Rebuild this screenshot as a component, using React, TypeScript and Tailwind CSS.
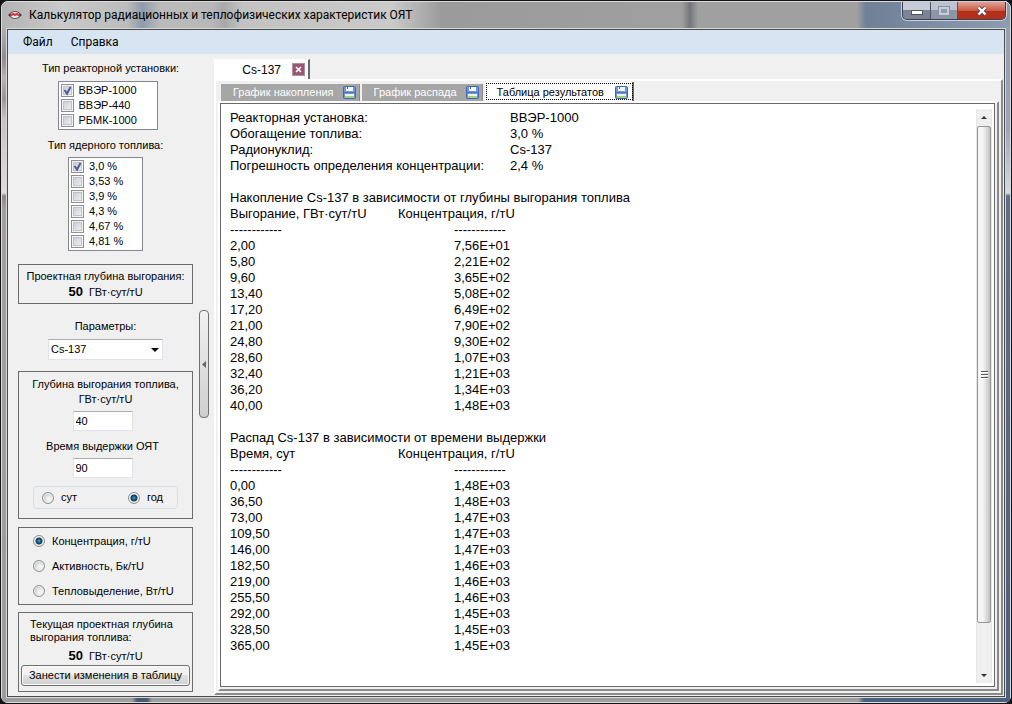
import { useState } from "react";
import type { ReactNode } from "react";

const reactors = ["ВВЭР-1000", "ВВЭР-440", "РБМК-1000"];
const fuels = ["3,0 %", "3,53 %", "3,9 %", "4,3 %", "4,67 %", "4,81 %"];
const quantities = ["Концентрация, г/тU", "Активность, Бк/тU", "Тепловыделение, Вт/тU"];

const summary = [
  ["Реакторная установка:", "ВВЭР-1000"],
  ["Обогащение топлива:", "3,0 %"],
  ["Радионуклид:", "Cs-137"],
  ["Погрешность определения концентрации:", "2,4 %"],
];

const accumulation = [
  ["2,00", "7,56E+01"],
  ["5,80", "2,21E+02"],
  ["9,60", "3,65E+02"],
  ["13,40", "5,08E+02"],
  ["17,20", "6,49E+02"],
  ["21,00", "7,90E+02"],
  ["24,80", "9,30E+02"],
  ["28,60", "1,07E+03"],
  ["32,40", "1,21E+03"],
  ["36,20", "1,34E+03"],
  ["40,00", "1,48E+03"],
];

const decay = [
  ["0,00", "1,48E+03"],
  ["36,50", "1,48E+03"],
  ["73,00", "1,47E+03"],
  ["109,50", "1,47E+03"],
  ["146,00", "1,47E+03"],
  ["182,50", "1,46E+03"],
  ["219,00", "1,46E+03"],
  ["255,50", "1,46E+03"],
  ["292,00", "1,45E+03"],
  ["328,50", "1,45E+03"],
  ["365,00", "1,45E+03"],
];

function AppIcon() {
  return (
    <svg width="14" height="10" viewBox="0 0 14 10">
      <path d="M4 1.5 0 5l4 3.5z" fill="#7d2330" />
      <path d="M10 1.5 14 5l-4 3.5z" fill="#33415f" />
      <ellipse cx="7" cy="5" rx="4.5" ry="3.5" fill="#e8e8ee" stroke="#555" />
      <path d="M3 5.500 5 4l2 1 2-1 2 1.500" fill="none" stroke="#d8323c" strokeWidth="2" />
    </svg>
  );
}

function DiskIcon() {
  return (
    <svg width="13" height="13" viewBox="0 0 13 13">
      <rect x=".5" y=".5" width="12" height="12" rx="1" fill="#6f97da" stroke="#3f66b5" />
      <rect x="3" y="1" width="7" height="4" fill="#f4f7fc" />
      <rect x="4" y="1" width="1" height="2" fill="#3f66b5" />
      <rect x="1" y="6" width="11" height="1" fill="#4a74c4" />
      <rect x="2" y="8" width="9" height="4" fill="#eef4ea" />
      <rect x="2" y="10" width="9" height="2" fill="#a5cf7e" />
    </svg>
  );
}

function CheckItem({ label, checked }: { label: string; checked: boolean }) {
  return (
    <label className="flex h-[15px] items-center gap-[5px]">
      <span className="grid">
        <input
          type="checkbox"
          defaultChecked={checked}
          className="peer col-start-1 row-start-1 size-[13px] appearance-none border border-[#8e8f8f] bg-linear-to-br from-[#c3c8d0] to-[#f6f6f6] shadow-[inset_0_0_0_1px_#f4f4f4,inset_0_0_0_2px_#c0c4ca]"
        />
        <svg
          viewBox="0 0 13 13"
          className="pointer-events-none invisible col-start-1 row-start-1 size-[13px] peer-checked:visible"
        >
          <path d="M3.5 6 6 9.5 9.5 3" fill="none" stroke="#4a5f97" strokeWidth="2" />
        </svg>
      </span>
      {label}
    </label>
  );
}

function RadioItem({ label, name, checked }: { label: string; name: string; checked: boolean }) {
  return (
    <label className="flex items-center gap-[7px]">
      <input
        type="radio"
        name={name}
        defaultChecked={checked}
        className="size-3 appearance-none rounded-full border border-[#8e8f8f] bg-[radial-gradient(circle_at_60%_60%,#f4f4f4_20%,#c4c8cc_70%)] shadow-[inset_0_0_0_1px_#f4f4f4] checked:bg-[radial-gradient(circle_at_50%_50%,#8fd8f4_0,#1f6f9c_1px,#123a5c_3px,#dfe3e6_4px)]"
      />
      {label}
    </label>
  );
}

function GroupBox({ className, children }: { className: string; children: ReactNode }) {
  return <section className={`w-[175px] border border-[#6b6b6b] ${className}`}>{children}</section>;
}

function TitleBar() {
  return (
    <header className="flex h-[26px] items-start rounded-t-md bg-[linear-gradient(90deg,#b4b4b4_0,#c9c9c9_60px,#bcbcbc_125px,#8e9cac_140px,#bababa_158px,#b8b8b8_210px,#a8a8a8_222px,#c2c2c2_240px,#cacaca_390px,#9b9b9b_440px,#9f9f9f_680px,#74767a_688px,#a0a0a0_696px,#a0a0a0_855px,#6f8097_864px,#8e9cb0_100%)] pl-1.5">
      <div className="flex flex-1 items-center gap-[7px] self-stretch">
        <AppIcon />
        <h1 className="font-[Roboto,'Noto_Sans',sans-serif] text-xs">
          Калькулятор радиационных и теплофизических характеристик ОЯТ
        </h1>
      </div>
      <div className="mr-1 flex h-[18px] divide-x divide-[#4d5564] overflow-hidden rounded-b-[5px] border border-t-0 border-[#3c4350] shadow-[0_0_0_1px_#c8d0dc]">
        <button
          aria-label="Свернуть"
          className="flex w-7 items-center justify-center bg-linear-to-b from-[#c6ccd6] from-50% to-[#7a8494] to-50%"
        >
          <span className="mt-1 h-[5px] w-3 border border-[#4d5564] bg-white" />
        </button>
        <button
          aria-label="Развернуть"
          className="flex w-[27px] items-center justify-center bg-linear-to-b from-[#bcc4d0] from-50% to-[#8c96a6] to-50%"
        >
          <span className="h-2 w-2.5 border-2 border-[#c8ced8] bg-[#929cac] outline outline-[#8a94a4]" />
        </button>
        <button
          aria-label="Закрыть"
          className="flex w-[47px] items-center justify-center bg-linear-to-b from-[#df9c8e] from-5% via-[#c95a44] via-50% to-[#b5301a] to-55%"
        >
          <svg width="12" height="10" viewBox="0 0 12 10">
            <path d="m2.5 1.5 7 7m0-7-7 7" stroke="#5b4a50" strokeWidth="4" />
            <path d="m2.5 1.5 7 7m0-7-7 7" stroke="#fff" strokeWidth="2.4" />
          </svg>
        </button>
      </div>
    </header>
  );
}

function Sidebar() {
  return (
    <aside className="flex w-[195px] shrink-0 flex-col items-center pt-[7px] text-[11px] leading-[15px]">
      <h2 className="pl-2.5">Тип реакторной установки:</h2>
      <div className="mt-[5px] ml-1 w-[100px] border border-[#828790] bg-white px-0.5 pt-px pb-px">
        {reactors.map((r, i) => (
          <CheckItem key={r} label={r} checked={i === 0} />
        ))}
      </div>
      <h2 className="mt-2">Тип ядерного топлива:</h2>
      <div className="mt-1 w-[75px] border border-[#828790] bg-white px-0.5 pt-px pb-px">
        {fuels.map((f, i) => (
          <CheckItem key={f} label={f} checked={i === 0} />
        ))}
      </div>

      <GroupBox className="mt-[13px] h-10 pt-1 text-center">
        <p>Проектная глубина выгорания:</p>
        <p>
          <b className="mr-1.5 text-[13px]">50</b>ГВт·сут/тU
        </p>
      </GroupBox>

      <label htmlFor="nuclide" className="mt-[15px]">
        Параметры:
      </label>
      <div className="mt-[5px] grid w-[115px]">
        <select
          id="nuclide"
          className="col-start-1 row-start-1 h-[21px] appearance-none border border-[#e2e3ea] border-t-[#abadb3] bg-white px-0.5"
        >
          <option>Cs-137</option>
        </select>
        <svg
          width="8"
          height="4"
          className="pointer-events-none col-start-1 row-start-1 mr-1 self-center justify-self-end"
        >
          <path d="M0 0h8L4 4z" />
        </svg>
      </div>

      <GroupBox className="mt-[11px] flex h-[148px] flex-col items-center pt-[5px]">
        <label htmlFor="burnup" className="text-center">
          Глубина выгорания топлива,
          <br />
          ГВт·сут/тU
        </label>
        <input
          id="burnup"
          defaultValue="40"
          className="mt-1 mr-1.5 h-5 w-[60px] border border-[#e2e3ea] border-t-[#abadb3] bg-white px-0.5"
        />
        <label htmlFor="cooling" className="mt-2 mr-1.5">
          Время выдержки ОЯТ
        </label>
        <input
          id="cooling"
          defaultValue="90"
          className="mt-1 mr-1.5 h-5 w-[60px] border border-[#e2e3ea] border-t-[#abadb3] bg-white px-0.5"
        />
        <div className="mt-2 flex h-[23px] w-[145px] items-center justify-between rounded-sm border border-[#d5dfe5] pr-3.5 pl-2">
          <RadioItem name="unit" label="сут" checked={false} />
          <RadioItem name="unit" label="год" checked />
        </div>
      </GroupBox>

      <GroupBox className="mt-2 flex h-[78px] flex-col justify-center gap-2.5 pl-3.5">
        {quantities.map((q, i) => (
          <RadioItem key={q} name="quantity" label={q} checked={i === 0} />
        ))}
      </GroupBox>

      <GroupBox className="mt-[7px] h-20 px-0.5 pt-[5px]">
        <p className="pl-[9px] leading-[13px]">Текущая проектная глубина выгорания топлива:</p>
        <p className="mt-1 mb-px text-center">
          <b className="mr-1.5 text-[13px]">50</b>ГВт·сут/тU
        </p>
        <button className="h-[21px] w-full rounded-[3px] border border-[#707070] bg-linear-to-b from-[#f2f2f2] from-45% via-[#e2e2e2] via-50% to-[#d0d0d0] whitespace-nowrap shadow-[inset_0_0_0_1px_#fcfcfc]">
          Занести изменения в таблицу
        </button>
      </GroupBox>
    </aside>
  );
}

type ResultTableProps = { caption: string; argument: string; rows: string[][] };

function ResultTable({ caption, argument, rows }: ResultTableProps) {
  return (
    <table className="mt-4 table-fixed border-collapse text-left">
      <caption className="text-left whitespace-nowrap">{caption}</caption>
      <colgroup>
        <col className="w-[168px]" />
        <col className="w-14" />
        <col className="w-44" />
      </colgroup>
      <thead>
        <tr>
          <th className="font-normal">{argument}</th>
          <th colSpan={2} className="font-normal">
            Концентрация, г/тU
          </th>
        </tr>
        <tr>
          <td colSpan={2}>------------</td>
          <td>------------</td>
        </tr>
      </thead>
      <tbody>
        {rows.map(([x, y]) => (
          <tr key={x}>
            <td colSpan={2}>{x}</td>
            <td>{y}</td>
          </tr>
        ))}
      </tbody>
    </table>
  );
}

function ScrollBar() {
  return (
    <div className="mt-[5px] mb-[3px] flex w-4 flex-col border-x border-[#e6e6e6] bg-[#efefef]">
      <button aria-label="Вверх" className="flex h-[17px] items-center justify-center">
        <svg width="6" height="3">
          <path d="M0 3h6L3 0z" fill="#333" />
        </svg>
      </button>
      <div className="flex flex-11 items-center justify-center rounded-xs border border-[#979797] bg-linear-to-r from-[#f5f5f5] from-40% to-[#c0c0c6]">
        <svg width="7" height="8" shapeRendering="crispEdges">
          <path d="M0 .5h7M0 3.5h7M0 6.5h7" stroke="#555" />
          <path d="M0 1.5h7M0 4.5h7M0 7.5h7" stroke="#fff" />
        </svg>
      </div>
      <div className="flex-1" />
      <button aria-label="Вниз" className="flex h-[15px] items-center justify-center">
        <svg width="6" height="3">
          <path d="M0 0h6L3 3z" fill="#333" />
        </svg>
      </button>
    </div>
  );
}

const views = ["График накопления", "График распада", "Таблица результатов"];

function Results() {
  const [active, setActive] = useState(2);

  return (
    <main className="flex min-w-0 flex-1 flex-col pt-[5px] pr-px pb-px">
      <div className="flex h-5 w-24 items-center justify-end gap-3 border-t border-r-2 border-t-white border-r-[#696969] bg-white pr-1 text-[12px]">
        Cs-137
        <button
          aria-label="Закрыть вкладку"
          className="flex size-[11px] items-center justify-center bg-[#9a5574] outline outline-[#b98aa0]"
        >
          <svg width="7" height="7">
            <path d="m1 1 5 5m0-5-5 5" stroke="#fff" strokeWidth="1.6" />
          </svg>
        </button>
      </div>
      <div className="flex flex-1 flex-col border-2 border-t-white border-r-[#8a8a8a] border-b-[#8a8a8a] border-l-white px-0.5 pt-px pb-0.5">
        <div role="tablist" className="flex h-[19px] items-end gap-0.5 pl-[3px] text-[11px]">
          {views.map((v, i) => (
            <button
              key={v}
              role="tab"
              aria-selected={i === active}
              onClick={() => setActive(i)}
              className={
                i === active
                  ? "flex h-[19px] items-center gap-[11px] border-r-2 border-[#696969] bg-white pt-px pr-1 pl-3 outline-1 -outline-offset-2 outline-dotted outline-black"
                  : "flex h-[17px] items-center gap-[9px] border-r border-[#8a8a8a] bg-[#a6a6a6] pr-[3px] pl-3 text-white"
              }
            >
              {v}
              <DiskIcon />
            </button>
          ))}
        </div>
        <div className="flex flex-1 flex-col border-2 border-t-white border-r-[#8a8a8a] border-b-[#8a8a8a] border-l-white pr-0.5 pb-0.5">
          <div className="flex flex-1 border border-[#696969] bg-white pr-0.5">
            <div className="flex-1 pt-1.5 pl-[9px] text-[13px] leading-4">
              <dl className="grid grid-cols-[280px_1fr]">
                {summary.map(([k, v]) => (
                  <div key={k} className="contents">
                    <dt>{k}</dt>
                    <dd>{v}</dd>
                  </div>
                ))}
              </dl>
              <ResultTable
                caption="Накопление Cs-137 в зависимости от глубины выгорания топлива"
                argument="Выгорание, ГВт·сут/тU"
                rows={accumulation}
              />
              <ResultTable
                caption="Распад Cs-137 в зависимости от времени выдержки"
                argument="Время, сут"
                rows={decay}
              />
            </div>
            <ScrollBar />
          </div>
        </div>
      </div>
    </main>
  );
}

export default function App() {
  return (
    <div className="flex min-h-screen bg-[#141418] font-['Liberation_Sans',Arial,sans-serif] text-black">
      <div className="flex flex-1 flex-col rounded-lg border border-[#141418] bg-[#9f9f9f]">
        <div className="flex flex-1 flex-col rounded-[7px] border border-[#dcdcdc]">
          <TitleBar />
          <div className="flex flex-1">
            <div className="w-1 bg-[linear-gradient(180deg,#b0b0b0_0,#908c8c_30px,#b8b4b4_50px,#989494_70px,#c8c0c0_90px,#e4dada_165px,#8a8686_168px,#a4a0a0_180px,#9c9c9c_100%)]" />
            <div className="flex flex-1 flex-col border border-[#d8d8d8]">
              <div className="flex flex-1 flex-col border border-[#4a4a4a] bg-[#f0f0f0]">
                <nav className="flex h-6 items-center gap-[18px] bg-[#d7e4f1] pl-[15px] font-[Roboto,'Noto_Sans',sans-serif] text-xs">
                  <button>Файл</button>
                  <button>Справка</button>
                </nav>
                <div className="flex flex-1">
                  <Sidebar />
                  <button
                    aria-label="Свернуть панель"
                    className="mt-[256px] mr-[5px] -ml-1 flex h-[108px] w-2.5 items-center justify-center rounded-sm border border-[#707070] bg-linear-to-b from-[#f2f2f2] to-[#cfcfcf]"
                  >
                    <svg width="4" height="7">
                      <path d="M4 0v7L0 3.5z" fill="#666" />
                    </svg>
                  </button>
                  <Results />
                </div>
              </div>
            </div>
            <div className="w-1 bg-[linear-gradient(180deg,#93a0b4_0,#98a5b8_100px,#d3dae2_165px,#5d6f8a_168px,#4b5f7e_100%)]" />
          </div>
          <div className="h-1 rounded-b-md bg-[linear-gradient(90deg,#9f9f9f_130px,#465a76_135px,#465a76_145px,#9f9f9f_150px,#9f9f9f_856px,#4b5f7e_862px)]" />
        </div>
      </div>
    </div>
  );
}
